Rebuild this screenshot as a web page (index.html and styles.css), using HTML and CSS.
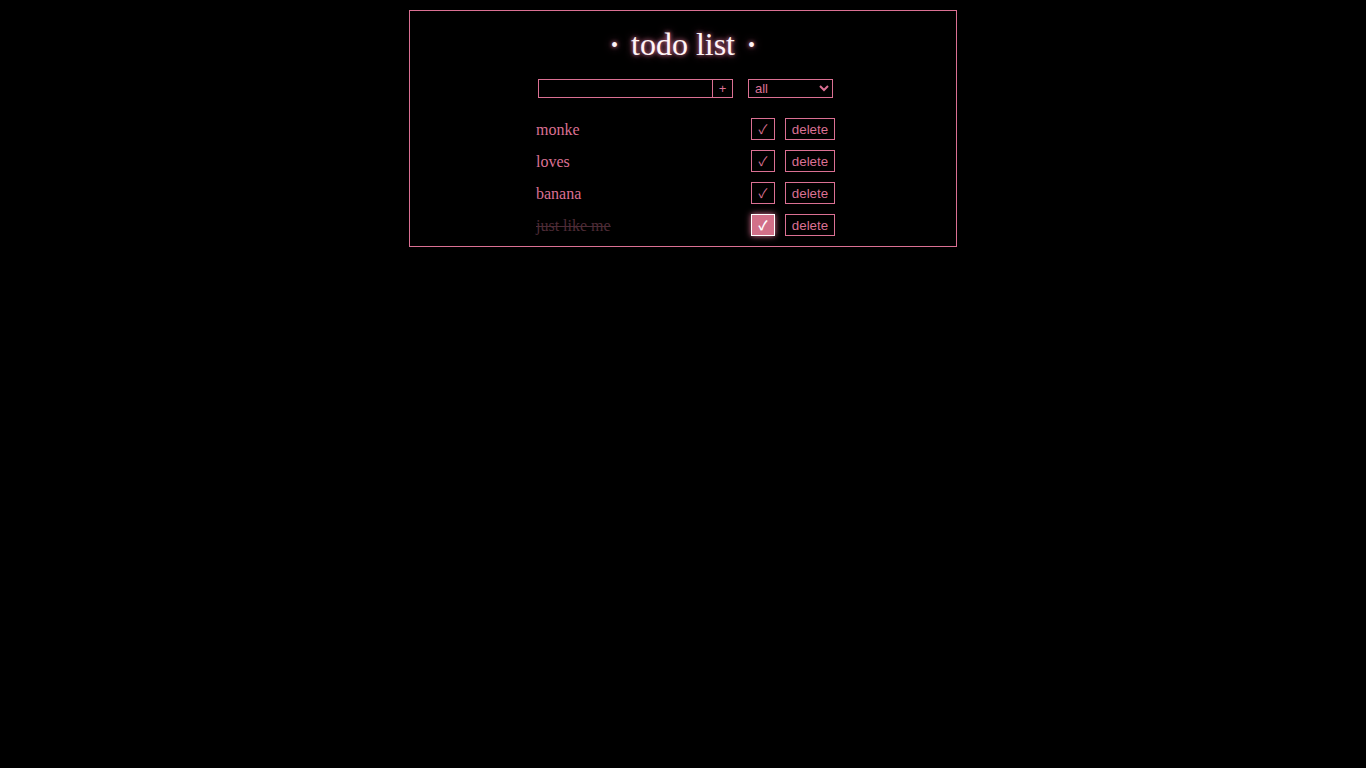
FILE: index.html
```html
<!DOCTYPE html>
<html>
<head>
<meta charset="utf-8">
<link rel="stylesheet" href="styles.css">
</head>
<body>
<div class="app">
  <h1 class="title"><span class="dot">•</span>todo list<span class="dot">•</span></h1>
  <form class="form">
    <div class="add">
      <input class="add-input" type="text">
      <button class="add-btn" type="button">+</button>
    </div>
    <select class="filter">
      <option>all</option>
      <option>done</option>
      <option>todo</option>
    </select>
  </form>
  <ul class="list">
    <li class="item"><span class="item-text">monke</span><button class="check" type="button">✓</button><button class="del" type="button">delete</button></li>
    <li class="item"><span class="item-text">loves</span><button class="check" type="button">✓</button><button class="del" type="button">delete</button></li>
    <li class="item"><span class="item-text">banana</span><button class="check" type="button">✓</button><button class="del" type="button">delete</button></li>
    <li class="item done"><span class="item-text">just like me</span><button class="check checked" type="button">✓</button><button class="del" type="button">delete</button></li>
  </ul>
</div>
</body>
</html>
```
FILE: styles.css
```css
html, body {
  margin: 0;
  padding: 0;
  background: #000;
}
body {
  font-family: "Liberation Serif", "Times New Roman", serif;
  color: #db7093;
}
.app {
  margin: 10px auto 0;
  border: 1px solid #db7093;
  padding: 15px 0 10px 5px;
  box-sizing: content-box;
  width: 541px;
}
.title {
  display: flex;
  justify-content: center;
  align-items: baseline;
  gap: 13px;
  height: 36px;
  margin: 0;
  font-size: 32px;
  font-weight: normal;
  line-height: 36px;
  color: #fff4f7;
  text-shadow: 0 0 4px #db7093, 0 0 8px rgba(219, 112, 147, 0.6);
  padding-right: 5px;
}
.dot {
  font-size: 20px;
  line-height: 1;
  position: relative;
  top: -3px;
}
.form {
  display: flex;
  justify-content: center;
  gap: 15px;
  margin: 17px 0 0;
}
.add {
  display: flex;
}
.add-input {
  width: 175px;
  height: 19px;
  box-sizing: border-box;
  border: 1px solid #db7093;
  background: #000;
  color: #db7093;
  margin: 0;
  padding: 0 2px;
  outline: none;
}
.add-btn {
  width: 20px;
  height: 19px;
  box-sizing: border-box;
  border: 1px solid #db7093;
  border-left: none;
  background: #000;
  color: #db7093;
  margin: 0;
  padding: 0;
  font-family: "Liberation Sans", Arial, sans-serif;
  font-size: 13px;
  line-height: 17px;
}
.filter {
  width: 85px;
  height: 19px;
  box-sizing: border-box;
  border: 1px solid #db7093;
  border-radius: 0;
  background: #000;
  color: #db7093;
  margin: 0;
  padding: 0 2px;
  font-family: "Liberation Sans", Arial, sans-serif;
  font-size: 13px;
}
.list {
  list-style: none;
  margin: 20px auto 0;
  padding: 0;
  width: 299px;
}
.item {
  display: flex;
  align-items: center;
  height: 22px;
  margin-bottom: 10px;
}
.item:last-child {
  margin-bottom: 0;
}
.item-text {
  flex: 1;
  font-size: 16px;
  position: relative;
  top: 1px;
}
.done .item-text {
  color: #4d2b36;
  text-decoration: line-through;
}
.check {
  width: 24px;
  height: 22px;
  box-sizing: border-box;
  border: 1px solid #db7093;
  background: #000;
  color: #db7093;
  margin: 0 10px 0 0;
  padding: 0;
  font-family: "Noto Sans CJK JP", "DejaVu Sans", sans-serif;
  font-size: 13px;
  line-height: 20px;
}
.check.checked {
  background: #d27089;
  border-color: #fff;
  color: #fff;
  box-shadow: 0 0 6px #db7093;
  font-weight: bold;
}
.del {
  width: 50px;
  height: 22px;
  box-sizing: border-box;
  border: 1px solid #db7093;
  background: #000;
  color: #db7093;
  margin: 0;
  padding: 0;
  font-family: "Liberation Sans", Arial, sans-serif;
  font-size: 13.33px;
}
```
